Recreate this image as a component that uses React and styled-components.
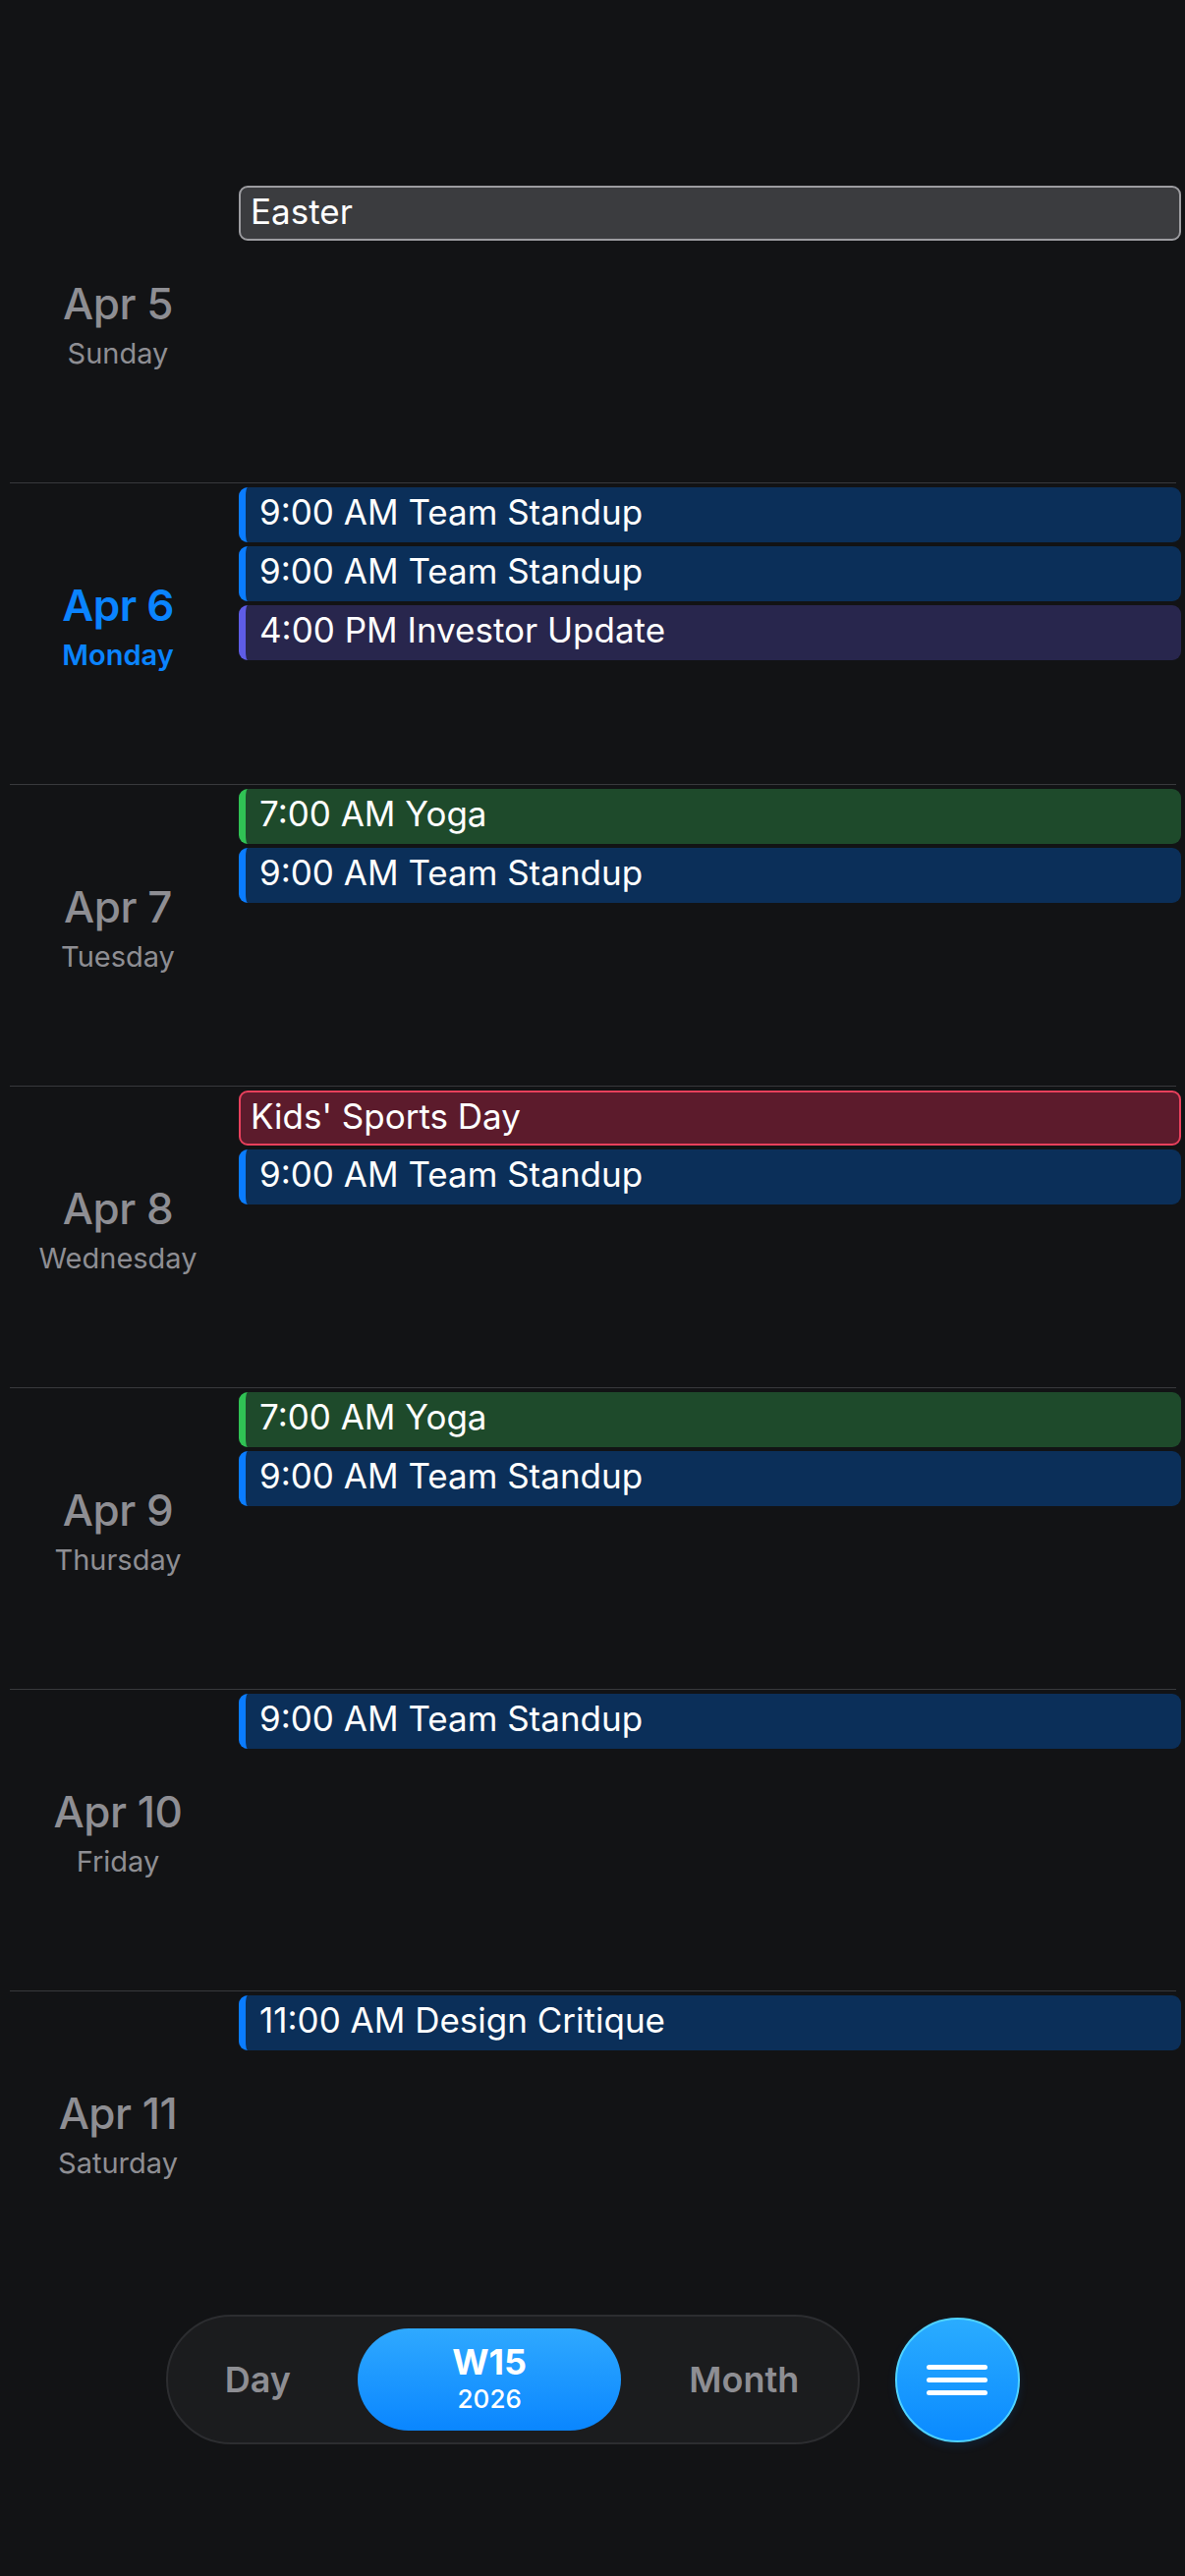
import React from 'react';
import styled, { createGlobalStyle } from 'styled-components';

const GlobalStyle = createGlobalStyle`
  html, body {
    margin: 0;
    padding: 0;
    background: #121315;
  }
  body {
    font-family: Inter, "Noto Sans", "Liberation Sans", sans-serif;
    -webkit-font-smoothing: antialiased;
  }
  * { box-sizing: border-box; }
`;

const days = [
  { date: 'Apr 5', name: 'Sunday', events: [{ kind: 'allday', title: 'Easter' }] },
  {
    date: 'Apr 6', name: 'Monday', today: true,
    events: [
      { kind: 'blue', title: '9:00 AM Team Standup' },
      { kind: 'blue', title: '9:00 AM Team Standup' },
      { kind: 'purple', title: '4:00 PM Investor Update' },
    ],
  },
  {
    date: 'Apr 7', name: 'Tuesday',
    events: [
      { kind: 'green', title: '7:00 AM Yoga' },
      { kind: 'blue', title: '9:00 AM Team Standup' },
    ],
  },
  {
    date: 'Apr 8', name: 'Wednesday',
    events: [
      { kind: 'red', title: "Kids' Sports Day" },
      { kind: 'blue', title: '9:00 AM Team Standup' },
    ],
  },
  {
    date: 'Apr 9', name: 'Thursday',
    events: [
      { kind: 'green', title: '7:00 AM Yoga' },
      { kind: 'blue', title: '9:00 AM Team Standup' },
    ],
  },
  { date: 'Apr 10', name: 'Friday', events: [{ kind: 'blue', title: '9:00 AM Team Standup' }] },
  { date: 'Apr 11', name: 'Saturday', events: [{ kind: 'blue', title: '11:00 AM Design Critique' }] },
];

// timed events: left accent + tinted fill; all-day: full outline
const palette = {
  blue: { bg: '#0b2f59', accent: '#0a7cff' },
  purple: { bg: '#28264d', accent: '#5e5ce6' },
  green: { bg: '#1e4a2b', accent: '#30c254' },
  allday: { bg: '#3b3c3f', border: '#9c9ca0' },
  red: { bg: '#5c1b2c', border: '#e8405c' },
};

const Screen = styled.div`
  min-height: 2622px;
  padding-top: 185px;
  display: flex;
  flex-direction: column;
  background: #121315;
`;

const Divider = styled.div`
  height: 1px;
  margin: 0 9px 0 10px;
  background: #38393c;
`;

const DayRow = styled.section`
  height: 306px;
  display: grid;
  grid-template-columns: 240px 1fr;
  column-gap: 3px;
  padding-right: 4px;
`;

const DateCol = styled.div`
  display: flex;
  flex-direction: column;
  align-items: center;
  justify-content: center;
  padding-bottom: 12px;
  color: ${p => (p.$today ? '#0a84ff' : '#8e8e93')};
`;

const DateLabel = styled.div`
  font-size: 44px;
  line-height: 56px;
  font-weight: ${p => (p.$today ? 600 : 500)};
  letter-spacing: -0.5px;
`;

const DayName = styled.div`
  font-size: 29px;
  line-height: 46px;
  font-weight: ${p => (p.$today ? 600 : 400)};
`;

const Events = styled.div`
  display: flex;
  flex-direction: column;
  gap: 4px;
  padding-top: 4px;
`;

const Chip = styled.div`
  height: 56px;
  border-radius: 9px;
  background: ${p => palette[p.$kind].bg};
  color: #fff;
  font-size: 35px;
  line-height: 50px;
  white-space: nowrap;
  overflow: hidden;
  ${p => (palette[p.$kind].border
    ? `border: 2px solid ${palette[p.$kind].border}; padding: 0 10px; line-height: 48px;`
    : `border-left: 7px solid ${palette[p.$kind].accent}; padding: 0 14px;`)}
`;

const Footer = styled.div`
  display: flex;
  justify-content: center;
  align-items: center;
  gap: 36px;
  padding-top: 23px;
`;

const Switcher = styled.div`
  width: 706px;
  height: 132px;
  padding: 0 14px;
  display: flex;
  align-items: center;
  gap: 24px;
  border-radius: 66px;
  background: #1b1c1e;
  border: 2px solid #2c2d30;
`;

const Segment = styled.div`
  width: ${p => p.$w}px;
  height: 104px;
  display: flex;
  flex-direction: column;
  align-items: center;
  justify-content: center;
  border-radius: 52px;
  color: #8e8e93;
  font-size: 36px;
  font-weight: 600;
`;

const ActiveSegment = styled(Segment)`
  background: linear-gradient(180deg, #2fa9ff 0%, #0a86ff 100%);
  color: #fff;
`;

const WeekNo = styled.div`
  font-size: 36px;
  line-height: 40px;
  font-weight: 700;
`;

const Year = styled.div`
  font-size: 26px;
  line-height: 36px;
  font-weight: 500;
`;

const MenuButton = styled.div`
  width: 127px;
  height: 127px;
  border-radius: 50%;
  display: flex;
  flex-direction: column;
  align-items: center;
  justify-content: center;
  gap: 8px;
  background: linear-gradient(180deg, #2aacff 0%, #0a8aff 100%);
  border: 2px solid #4fd2ff;
  box-shadow: 0 4px 10px rgba(0, 120, 255, 0.12);
`;

const MenuLine = styled.span`
  width: 62px;
  height: 5px;
  border-radius: 3px;
  background: #fff;
`;

export default function App() {
  return (
    <>
      <GlobalStyle />
      <Screen>
        {days.map((d, i) => (
          <React.Fragment key={d.date}>
            {i > 0 && <Divider />}
            <DayRow>
              <DateCol $today={d.today}>
                <DateLabel $today={d.today}>{d.date}</DateLabel>
                <DayName $today={d.today}>{d.name}</DayName>
              </DateCol>
              <Events>
                {d.events.map((e, j) => (
                  <Chip key={j} $kind={e.kind}>{e.title}</Chip>
                ))}
              </Events>
            </DayRow>
          </React.Fragment>
        ))}
        <Footer>
          <Switcher>
            <Segment $w={157}>Day</Segment>
            <ActiveSegment $w={270}>
              <WeekNo>W15</WeekNo>
              <Year>2026</Year>
            </ActiveSegment>
            <Segment $w={204}>Month</Segment>
          </Switcher>
          <MenuButton>
            <MenuLine />
            <MenuLine />
            <MenuLine />
          </MenuButton>
        </Footer>
      </Screen>
    </>
  );
}
